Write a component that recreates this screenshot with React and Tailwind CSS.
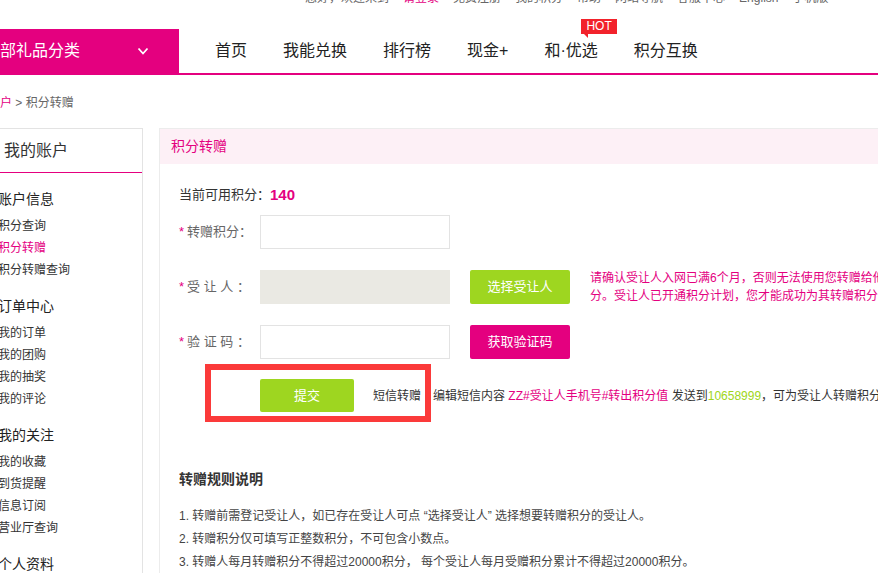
const FONT = { fontFamily: '"Liberation Sans", "Noto Sans CJK SC", sans-serif' };

const topLinks = [
  { t: '您好，欢迎来到', c: 'text-[#666]' },
  { t: '请登录', c: 'text-[#e4007f]' },
  { t: '免费注册', c: 'text-[#666]' },
  { t: '我的积分', c: 'text-[#666]' },
  { t: '帮助', c: 'text-[#666]' },
  { t: '网站导航', c: 'text-[#666]' },
  { t: '客服中心', c: 'text-[#666]' },
  { t: 'English', c: 'text-[#666]' },
  { t: '手机版', c: 'text-[#666]' },
];

const navItems = ['首页', '我能兑换', '排行榜', '现金+', '和·优选', '积分互换'];

const sideSections = [
  { title: '账户信息', items: ['积分查询', '积分转赠', '积分转赠查询'] },
  { title: '订单中心', items: ['我的订单', '我的团购', '我的抽奖', '我的评论'] },
  { title: '我的关注', items: ['我的收藏', '到货提醒', '信息订阅', '营业厅查询'] },
  { title: '个人资料', items: ['修改密码'] },
];

function Label({ children }) {
  return (
    <div className="flex w-[81px] shrink-0 items-center text-[13px] text-[#666]">
      <span className="mr-[3px] text-[#e4007f]">*</span>
      {children}
    </div>
  );
}

function Sidebar() {
  return (
    <aside className="w-[161px] shrink-0 border border-[#e3e3e3] bg-white">
      <div className="flex h-[44px] items-center border-b border-[#e4007f] pl-[21px] text-[16px] text-[#333]">
        我的账户
      </div>
      <div className="pt-[1px]">
        {sideSections.map((s) => (
          <div key={s.title} className="pl-[15px] pt-[10px]">
            <div className="text-[14px] leading-[31px] text-[#222]">{s.title}</div>
            {s.items.map((it) => (
              <div
                key={it}
                className={`text-[12px] leading-[22px] ${it === '积分转赠' ? 'text-[#e4007f]' : 'text-[#333]'}`}
              >
                {it}
              </div>
            ))}
          </div>
        ))}
      </div>
    </aside>
  );
}

function Transfer() {
  return (
    <section className="w-[900px] shrink-0 border border-[#ececec] bg-white">
      <div className="flex h-[35px] items-center bg-[#fdf0f6] pl-[11px] text-[14px] text-[#e4007f]">积分转赠</div>
      <div className="pl-[19px] pt-[21px]">
        <div className="flex h-[20px] items-center text-[13px] text-[#333]">
          <span>当前可用积分：</span>
          <span className="text-[15px] font-bold text-[#e4007f]">140</span>
        </div>

        <div className="mt-[10px] flex items-center">
          <Label>转赠积分：</Label>
          <div className="h-[34px] w-[190px] border border-[#e3e3e3] bg-white" />
        </div>

        <div className="mt-[20px] flex items-center">
          <Label>受 让 人 ：</Label>
          <div className="h-[34px] w-[190px] bg-[#eae9e3]" />
          <button className="ml-[20px] h-[34px] w-[100px] rounded-[2px] bg-[#9ed620] text-[13px] text-white">
            选择受让人
          </button>
          <div className="ml-[20px] whitespace-nowrap text-[12px] leading-[18px] text-[#e4007f]">
            请确认受让人入网已满6个月，否则无法使用您转赠给他的积
            <br />
            分。受让人已开通积分计划，您才能成功为其转赠积分。
          </div>
        </div>

        <div className="mt-[20px] flex items-center">
          <Label>验 证 码 ：</Label>
          <div className="h-[34px] w-[190px] border border-[#e3e3e3] bg-white" />
          <button className="ml-[20px] h-[34px] w-[100px] rounded-[2px] bg-[#e4007f] text-[13px] text-white">
            获取验证码
          </button>
        </div>

        <div className="relative mt-[20px] flex items-center pl-[81px]">
          <div className="pointer-events-none absolute left-[26px] top-[-15px] h-[58px] w-[226px] border-[6px] border-[#fb3a3a]" />
          <button className="h-[33px] w-[94px] rounded-[2px] bg-[#9ed620] text-[13px] text-white">提交</button>
          <span className="ml-[19px] whitespace-nowrap text-[12px] text-[#333]">短信转赠</span>
          <span className="ml-[12px] whitespace-nowrap text-[12px] text-[#333]">
            编辑短信内容 <span className="text-[#e4007f]">ZZ#受让人手机号#转出积分值</span> 发送到
            <span className="text-[#9ed620]">10658999</span>，可为受让人转赠积分。
          </span>
        </div>

        <div className="mt-[57px] text-[14px] font-bold leading-[20px] text-[#333]">转赠规则说明</div>
        <div className="mt-[16px] text-[12px] leading-[23px] text-[#444]">
          <div>1. 转赠前需登记受让人，如已存在受让人可点 “选择受让人” 选择想要转赠积分的受让人。</div>
          <div>2. 转赠积分仅可填写正整数积分，不可包含小数点。</div>
          <div>3. 转赠人每月转赠积分不得超过20000积分， 每个受让人每月受赠积分累计不得超过20000积分。</div>
          <div>4. 积分转赠成功后不可撤销。</div>
        </div>
      </div>
    </section>
  );
}

export default function App() {
  return (
    <div className="h-[573px] w-[878px] overflow-hidden bg-white" style={FONT}>
      <div className="h-[29px] overflow-hidden">
        <div className="-mt-[10px] flex gap-[14px] whitespace-nowrap pl-[305px] text-[12px] leading-[16px]">
          {topLinks.map((l) => (
            <span key={l.t} className={l.c}>
              {l.t}
            </span>
          ))}
        </div>
      </div>

      <nav className="flex h-[46px] border-b-2 border-[#e4007f]">
        <div className="flex h-[44px] w-[179px] shrink-0 items-center bg-[#e4007f] text-[16px] text-white">
          <span>部礼品分类</span>
          <svg className="ml-[57px]" width="12" height="9" viewBox="0 0 12 9" fill="none">
            <polyline points="1.5,1.5 6,6.5 10.5,1.5" stroke="white" strokeWidth="1.8" />
          </svg>
        </div>
        <div className="ml-[18px] flex h-[44px] items-center">
          {navItems.map((n) => (
            <div key={n} className="relative whitespace-nowrap px-[18px] text-[16px] text-[#222]">
              {n}
              {n === '和·优选' && (
                <span className="absolute left-[55px] top-[-20px] bg-[#f2222b] px-[5px] text-[12px] leading-[15px] text-white">
                  HOT
                  <span className="absolute left-[3px] top-[15px] h-0 w-0 border-l-[4px] border-t-[4px] border-l-transparent border-t-[#f2222b]" />
                </span>
              )}
            </div>
          ))}
        </div>
      </nav>

      <div className="mt-[18px] text-[12px] leading-[20px] text-[#666]">
        <span className="text-[#e4007f]">户</span> &gt; 积分转赠
      </div>

      <div className="-ml-[18px] mt-[15px] flex gap-[16px]">
        <Sidebar />
        <Transfer />
      </div>
    </div>
  );
}
